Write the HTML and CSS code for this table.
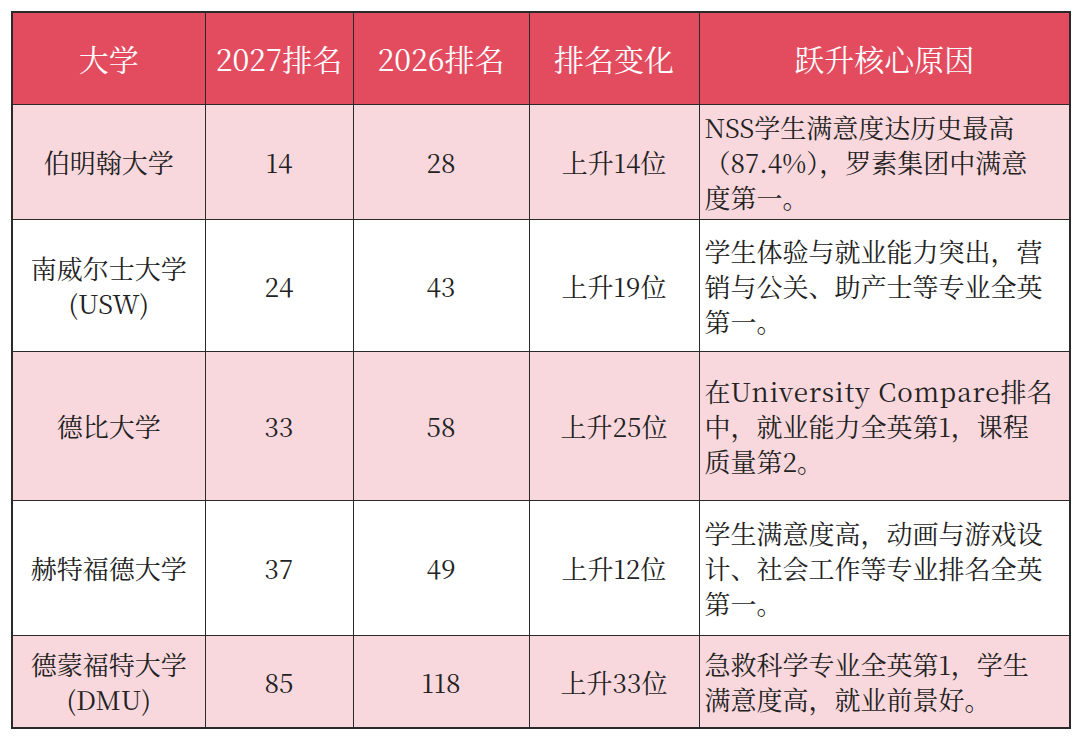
FILE: index.html
```html
<!DOCTYPE html>
<html lang="zh-CN">
<head>
<meta charset="utf-8">
<link rel="stylesheet" href="styles.css">
</head>
<body>
<table class="rank">
  <colgroup>
    <col class="c1"><col class="c2"><col class="c3"><col class="c4"><col class="c5">
  </colgroup>
  <thead>
    <tr class="head">
      <th>大学</th><th>2027排名</th><th>2026排名</th><th>排名变化</th><th>跃升核心原因</th>
    </tr>
  </thead>
  <tbody>
    <tr class="pink r1">
      <td>伯明翰大学</td><td>14</td><td>28</td><td>上升14位</td>
      <td class="why">NSS学生满意度达历史最高<br>（87.4%），罗素集团中满意<br>度第一。</td>
    </tr>
    <tr class="white r2">
      <td>南威尔士大学<br>(USW)</td><td>24</td><td>43</td><td>上升19位</td>
      <td class="why">学生体验与就业能力突出，营<br>销与公关、助产士等专业全英<br>第一。</td>
    </tr>
    <tr class="pink r3">
      <td>德比大学</td><td>33</td><td>58</td><td>上升25位</td>
      <td class="why">在<span class="lat">University Compare</span>排名<br>中，就业能力全英第1，课程<br>质量第2。</td>
    </tr>
    <tr class="white r4">
      <td>赫特福德大学</td><td>37</td><td>49</td><td>上升12位</td>
      <td class="why">学生满意度高，动画与游戏设<br>计、社会工作等专业排名全英<br>第一。</td>
    </tr>
    <tr class="pink r5">
      <td>德蒙福特大学<br>(DMU)</td><td>85</td><td>118</td><td>上升33位</td>
      <td class="why">急救科学专业全英第1，学生<br>满意度高，就业前景好。</td>
    </tr>
  </tbody>
</table>
</body>
</html>
```

FILE: styles.css
```css
html, body {
  margin: 0;
  padding: 0;
  background: #ffffff;
}
body {
  padding: 11px 0 0 11px;
  font-family: "Noto Serif CJK SC", "Liberation Serif", "Noto Sans CJK SC", serif;
  color: #222222;
}
.rank {
  border-collapse: collapse;
  table-layout: fixed;
  width: 1058px;
  border: 2px solid #2a2a2a;
}
.c1 { width: 193px; }
.c2 { width: 148px; }
.c3 { width: 176px; }
.c4 { width: 170px; }
.c5 { width: 371px; }
.rank th, .rank td {
  border: 1.5px solid #2a2a2a;
  text-align: center;
  vertical-align: middle;
  padding: 0 4px;
}
.rank th {
  font-weight: normal;
  font-size: 30px;
  color: #ffffff;
  line-height: 36px;
}
.rank td {
  font-size: 26px;
  line-height: 35px;
}
.head { background: #e34b5f; height: 92px; }
.pink { background: #f9d8dd; }
.white { background: #ffffff; }
.r1 { height: 115px; }
.r2 { height: 132px; }
.r3 { height: 149px; }
.r4 { height: 135px; }
.r5 { height: 93px; }
.rank td.why {
  text-align: left;
  padding-left: 5px;
  white-space: nowrap;
}
.lat {
  letter-spacing: 1px;
}
```
